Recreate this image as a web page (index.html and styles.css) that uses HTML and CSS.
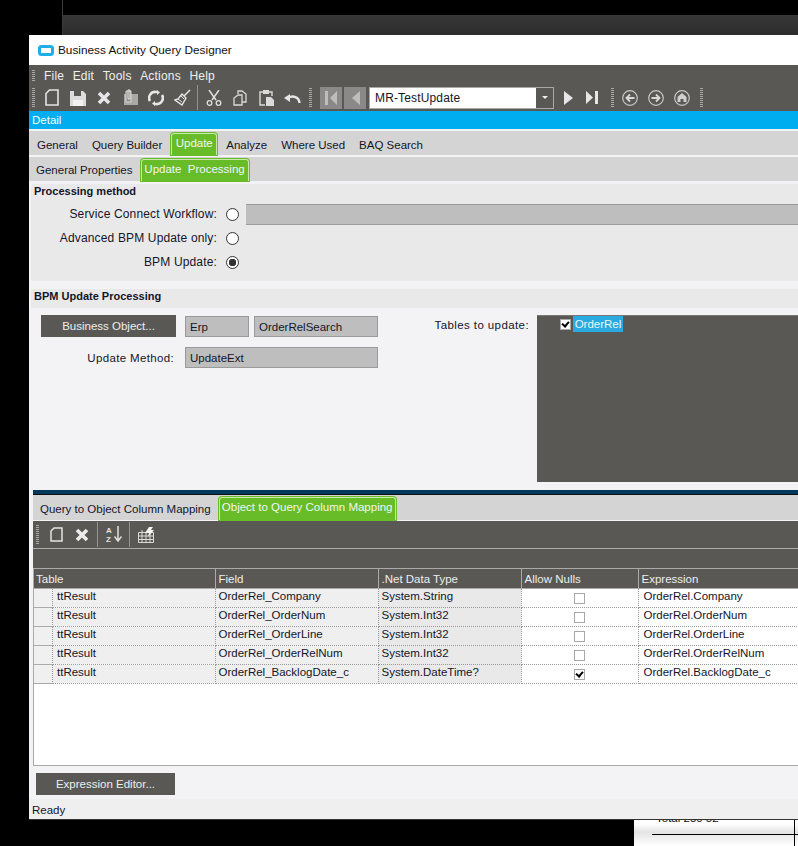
FILE: index.html
```html
<!DOCTYPE html>
<html>

	<head>
		<meta charset="UTF-8">
		<title>Business Activity Query Designer</title>
		<link rel="stylesheet" href="styles.css">
	</head>

	<body>
		<div class="desktop">
			<div class="back-top"></div>
			<div class="back-report">
				<div class="report-text">Total 250 52</div>
				<div class="report-hline"></div>
				<div class="report-vline"></div>
			</div>

			<div class="window">
				<div class="titlebar">
					<svg class="app-icon" width="16" height="11" viewBox="0 0 16 11"><rect x="1.5" y="1.5" width="13" height="8" rx="2" fill="#fff" stroke="#1cb0e6" stroke-width="3"/></svg>
					<span>Business Activity Query Designer</span>
				</div>

				<div class="toolbars">
					<div class="menubar">
						<i class="grip"></i>
						<span>File</span><span>Edit</span><span>Tools</span><span>Actions</span><span>Help</span>
					</div>
					<div class="toolbar">
						<i class="grip tall"></i>
						<svg class="ico m10" width="14" height="17" viewBox="0 0 14 17"><path d="M4.500 1h8.500v15H1V4.500z" fill="none" stroke="#e4e4e4" stroke-width="1.600"/></svg>
						<svg class="ico" width="16" height="16" viewBox="0 0 16 16"><path d="M0 1h13l3 3v12H0z" fill="#dcdcdc"/><path d="M4 1h7v5H4z" fill="#595855"/><path d="M3 10h10v6H3z" fill="#f2f2f2"/></svg>
						<svg class="ico" width="14" height="14" viewBox="0 0 14 14"><path d="M2 2l10 10M12 2L2 12" stroke="#e6e6e6" stroke-width="3.600" fill="none"/></svg>
						<svg class="ico m12" width="15" height="17" viewBox="0 0 15 17"><path d="M1 5h14v11H1z" fill="#a9a9a7"/><path d="M3 2h5v11H3z" fill="#8b8a88" stroke="#d8d8d8" stroke-width="1"/><path d="M5 1h2v9H5z" fill="none" stroke="#e0e0e0"/></svg>
						<svg class="ico m10" width="16" height="16" viewBox="0 0 16 16"><path d="M2 11A6 6 0 0 1 8 2h2M14 5a6 6 0 0 1-6 9H6" fill="none" stroke="#e6e6e6" stroke-width="2.600"/><path d="M9 0l3 2.500L9 5zM7 11l-3 2.500L7 16z" fill="#e6e6e6"/></svg>
						<svg class="ico m10" width="17" height="17" viewBox="0 0 17 17"><path d="M16 1l-6 6" stroke="#e6e6e6" stroke-width="1.500"/><path d="M8 5l4 4-4 7-7-5 3-1z" fill="none" stroke="#e6e6e6" stroke-width="1.400"/><path d="M4 10l4 3M7 7l3 3" stroke="#e6e6e6"/></svg>
						<i class="sep"></i>
						<svg class="ico" width="16" height="16" viewBox="0 0 16 16"><path d="M3 0l7 10M13 0L6 10" stroke="#e0e0e0" stroke-width="1.500"/><circle cx="3.500" cy="13" r="2.300" fill="none" stroke="#e0e0e0" stroke-width="1.300"/><circle cx="12.500" cy="13" r="2.300" fill="none" stroke="#e0e0e0" stroke-width="1.300"/></svg>
						<svg class="ico" width="14" height="16" viewBox="0 0 14 16"><path d="M5 4V1h4l4 3v8H9M5 5L1 8v7h8V5z" fill="none" stroke="#dadada" stroke-width="1.300"/></svg>
						<svg class="ico m12" width="15" height="16" viewBox="0 0 15 16"><path d="M4 2H1v13h5M10 2h3v4" fill="none" stroke="#dadada" stroke-width="1.400"/><path d="M4 0h6v4H4z" fill="#dadada"/><path d="M7 7h5l3 3v6H7z" fill="#dadada"/></svg>
						<svg class="ico m10" width="17" height="12" viewBox="0 0 17 12"><path d="M15.500 11C15 5 9 3 4 6" fill="none" stroke="#e6e6e6" stroke-width="2.400"/><path d="M0 6l6-4v8z" fill="#e6e6e6"/></svg>
						<i class="grip tall"></i>
						<div class="navbtn first"><svg width="12" height="14" viewBox="0 0 12 14"><path d="M0 0h3v14H0zM12 0v14L5 7z" fill="#bdbdbd"/></svg></div>
						<div class="navbtn"><svg width="9" height="14" viewBox="0 0 9 14"><path d="M9 0v14L1 7z" fill="#bdbdbd"/></svg></div>
						<div class="combo">
							<div class="combo-text">MR-TestUpdate</div>
							<div class="combo-arrow"><b></b></div>
						</div>
						<svg class="ico m10" width="9" height="14" viewBox="0 0 9 14"><path d="M0 0v14l9-7z" fill="#e6e6e6"/></svg>
						<svg class="ico m13" width="12" height="13" viewBox="0 0 12 13"><path d="M0 0v13l7-6.500zM9 0h3v13H9z" fill="#e6e6e6"/></svg>
						<i class="grip tall wide-gap"></i>
						<svg class="ico m8" width="16" height="16" viewBox="0 0 16 16"><circle cx="8" cy="8" r="7.300" fill="none" stroke="#c8c8c8" stroke-width="1.200"/><path d="M12.500 8H5M8 4.500L4.500 8 8 11.500" fill="none" stroke="#d8d8d8" stroke-width="1.800"/></svg>
						<svg class="ico m10" width="16" height="16" viewBox="0 0 16 16"><circle cx="8" cy="8" r="7.300" fill="none" stroke="#c8c8c8" stroke-width="1.200"/><path d="M3.500 8H11M8 4.500L11.500 8 8 11.500" fill="none" stroke="#d8d8d8" stroke-width="1.800"/></svg>
						<svg class="ico m10" width="16" height="16" viewBox="0 0 16 16"><circle cx="8" cy="8" r="7.300" fill="none" stroke="#c8c8c8" stroke-width="1.200"/><path d="M8 3l4.500 4v5H9.500V9h-3v3H3.500V7z" fill="#d0d0d0"/></svg>
						<i class="grip tall end"></i>
					</div>
				</div>

				<div class="detail-bar">Detail</div>

				<div class="tabs main-tabs">
					<span class="tab">General</span>
					<span class="tab">Query Builder</span>
					<span class="tab on">Update</span>
					<span class="tab">Analyze</span>
					<span class="tab">Where Used</span>
					<span class="tab">BAQ Search</span>
				</div>
				<div class="tabs sub-tabs">
					<span class="tab">General Properties</span>
					<span class="tab on">Update&nbsp; Processing</span>
				</div>

				<div class="group method">
					<h3>Processing method</h3>
					<div class="method-row">
						<label>Service Connect Workflow:</label>
						<i class="radio"></i>
						<div class="field wide"></div>
					</div>
					<div class="method-row">
						<label>Advanced BPM Update only:</label>
						<i class="radio"></i>
					</div>
					<div class="method-row">
						<label>BPM Update:</label>
						<i class="radio checked"></i>
					</div>
				</div>

				<div class="group-head"><h3>BPM Update Processing</h3></div>
				<div class="bpm">
					<div class="bpm-left">
						<div class="bpm-row">
							<div class="btn bo-btn">Business Object...</div>
							<div class="field erp">Erp</div>
							<div class="field search">OrderRelSearch</div>
						</div>
						<div class="bpm-row method-line">
							<label>Update Method:</label>
							<div class="field ext">UpdateExt</div>
						</div>
					</div>
					<label class="tables-label">Tables to update:</label>
					<div class="tables-list">
						<div class="tables-item">
							<i class="check on"></i>
							<span>OrderRel</span>
						</div>
					</div>
				</div>

				<div class="lower">
					<div class="tabs low-tabs">
						<span class="tab">Query to Object Column Mapping</span>
						<span class="tab on">Object to Query Column Mapping</span>
					</div>
					<div class="grid-tools">
						<i class="grip tall"></i>
						<svg class="ico g-new" width="13" height="15" viewBox="0 0 13 15"><path d="M4 1h8v13H1V4z" fill="none" stroke="#e4e4e4" stroke-width="1.500"/></svg>
						<svg class="ico g-del" width="14" height="14" viewBox="0 0 14 14"><path d="M2 2l10 10M12 2L2 12" stroke="#ececec" stroke-width="3.600" fill="none"/></svg>
						<i class="sep"></i>
						<svg class="ico g-sort" width="16" height="17" viewBox="0 0 16 17"><path d="M12 0v14M8.500 10.500L12 15l3.500-4.500" fill="none" stroke="#e0e0e0" stroke-width="1.500"/><text x="0" y="7" class="az">A</text><text x="0" y="16" class="az">Z</text></svg>
						<i class="sep tight"></i>
						<svg class="ico g-grid" width="16" height="16" viewBox="0 0 16 16"><path d="M.5 5.500h15v10H.5zM.5 9h15M.5 12.500h15M4 3v13M8 5v11M12 5v11" fill="none" stroke="#dadada"/><path d="M7 6l4-6h4l-2 3h3l-6 7 1-4z" fill="#f4f4f4"/></svg>
					</div>
					<div class="grid-strip"></div>
					<div class="grid-box">
						<table class="grid">
							<colgroup>
								<col class="c-table"><col class="c-field"><col class="c-type"><col class="c-null"><col class="c-expr">
							</colgroup>
							<thead>
								<tr><th>Table</th><th>Field</th><th>.Net Data Type</th><th>Allow Nulls</th><th>Expression</th></tr>
							</thead>
							<tbody>
								<tr>
									<td class="first"><i class="selector"></i>ttResult</td>
									<td>OrderRel_Company</td>
									<td class="type">System.String</td>
									<td class="nulls"><i class="check"></i></td>
									<td class="expr">OrderRel.Company</td>
								</tr>
								<tr>
									<td class="first"><i class="selector"></i>ttResult</td>
									<td>OrderRel_OrderNum</td>
									<td class="type">System.Int32</td>
									<td class="nulls"><i class="check"></i></td>
									<td class="expr">OrderRel.OrderNum</td>
								</tr>
								<tr>
									<td class="first"><i class="selector"></i>ttResult</td>
									<td>OrderRel_OrderLine</td>
									<td class="type">System.Int32</td>
									<td class="nulls"><i class="check"></i></td>
									<td class="expr">OrderRel.OrderLine</td>
								</tr>
								<tr>
									<td class="first"><i class="selector"></i>ttResult</td>
									<td>OrderRel_OrderRelNum</td>
									<td class="type">System.Int32</td>
									<td class="nulls"><i class="check"></i></td>
									<td class="expr">OrderRel.OrderRelNum</td>
								</tr>
								<tr>
									<td class="first"><i class="selector"></i>ttResult</td>
									<td>OrderRel_BacklogDate_c</td>
									<td class="type">System.DateTime?</td>
									<td class="nulls"><i class="check on"></i></td>
									<td class="expr">OrderRel.BacklogDate_c</td>
								</tr>
							</tbody>
						</table>
					</div>
					<div class="btn expr-btn">Expression Editor...</div>
				</div>

				<div class="status">Ready</div>
			</div>
		</div>
	</body>

</html>
```

FILE: styles.css
```css
html, body {
	margin: 0;
	padding: 0;
	background: #000;
}

.desktop {
	position: relative;
	width: 798px;
	height: 846px;
	overflow: hidden;
	background: #000;
	font: 11.5px/14px "Liberation Sans", Arial, sans-serif;
	color: #15152a;
}

i {
	display: block;
	font-style: normal;
}

h3 {
	margin: 0;
	font-size: 11px;
	line-height: 14px;
	font-weight: bold;
}

label {
	display: block;
}

/* behind the window */
.back-top {
	position: absolute;
	left: 62px;
	top: 0;
	right: 0;
	height: 35px;
	border-left: 1px solid #3a3a3a;
	box-sizing: border-box;
	background: linear-gradient(#000 15px, #383838 15px, #2c2c2c 35px);
}

.back-report {
	position: absolute;
	left: 634px;
	top: 800px;
	width: 164px;
	height: 46px;
	background: linear-gradient(#fff 24px, #e4e4e4 32px, #fff 46px);
}

.report-text {
	position: absolute;
	left: 22px;
	top: 11px;
	color: #111;
}

.report-hline {
	position: absolute;
	left: 18px;
	right: 0;
	top: 34px;
	height: 1px;
	background: #000;
}

.report-vline {
	position: absolute;
	left: 160px;
	top: 0;
	bottom: 0;
	width: 1px;
	background: #000;
}

/* window */
.window {
	position: absolute;
	left: 29px;
	top: 35px;
	width: 900px;
	height: 785px;
	box-sizing: border-box;
	background: #f3f3f5;
	border-bottom: 1px solid #333;
	display: flex;
	flex-direction: column;
}

.titlebar {
	height: 30px;
	flex: none;
	background: #fff;
	display: flex;
	align-items: center;
	gap: 4px;
	padding-left: 9px;
	font-size: 11.800px;
	color: #111;
}

.toolbars {
	height: 46px;
	flex: none;
	background: #595855;
	color: #efefef;
	font-size: 12px;
}

.menubar {
	height: 19px;
	padding-left: 3px;
	display: flex;
	align-items: center;
	position: relative;
	top: 1px;
	letter-spacing: .2px;
}

.menubar span {
	margin-right: 8.500px;
}

.menubar .grip {
	margin-right: 9px;
}

.grip {
	width: 3px;
	height: 12px;
	flex: none;
	background: repeating-linear-gradient(#a8a8a8 0 1px, #595855 1px 2px);
}

.grip.tall {
	height: 20px;
}

.toolbar {
	height: 27px;
	padding-left: 3px;
	display: flex;
	align-items: center;
}

.toolbar .ico {
	flex: none;
	margin-left: 11px;
}

.toolbar .ico.m8 { margin-left: 8px; }
.toolbar .ico.m10 { margin-left: 10px; }
.toolbar .ico.m12 { margin-left: 12px; }
.toolbar .ico.m13 { margin-left: 13px; }

.sep {
	width: 1px;
	height: 25px;
	flex: none;
	background: #929290;
	margin: 0 8px 0 6px;
}

.toolbar .sep + .ico {
	margin-left: 0;
}

.toolbar .ico + .grip {
	margin-left: 8px;
}

.toolbar .ico + .grip.wide-gap {
	margin-left: 13px;
}

.toolbar .ico + .grip.end {
	margin-left: 10px;
}

.navbtn {
	width: 22px;
	height: 22px;
	flex: none;
	background: #8a8987;
	display: flex;
	align-items: center;
	justify-content: center;
	margin-left: 2px;
}

.navbtn.first {
	margin-left: 8px;
}

.combo {
	width: 185px;
	height: 22px;
	flex: none;
	margin-left: 3px;
	box-sizing: border-box;
	border: 1px solid #a8a8a8;
	background: #fff;
	display: flex;
	color: #15152a;
}

.combo-text {
	flex: 1;
	padding-left: 5px;
	line-height: 20px;
	letter-spacing: .15px;
}

.combo-arrow {
	width: 17px;
	background: #595855;
	display: flex;
	align-items: center;
	justify-content: center;
}

.combo-arrow b {
	width: 0;
	height: 0;
	border: 3px solid transparent;
	border-top: 3px solid #eee;
	border-bottom: 0;
}

.detail-bar {
	height: 18px;
	flex: none;
	background: #00aeef;
	color: #fff;
	line-height: 18px;
	padding-left: 3px;
}

/* tabs */
.tabs {
	display: flex;
	background: #d4d4d4;
	flex: none;
}

.tab {
	display: block;
	white-space: nowrap;
}

.tab.on {
	background: #68bc27;
	color: #f4f4f4;
	border: 1px solid #c8e9ad;
	border-bottom: 0;
	border-radius: 3px 3px 0 0;
	box-shadow: 0 0 0 1px #68bc27;
	box-sizing: border-box;
}

.main-tabs {
	height: 24px;
	margin-top: 2px;
	padding-left: 8px;
	line-height: 28px;
}

.main-tabs .tab {
	margin-right: 14px;
}

.main-tabs .tab.on {
	width: 46px;
	height: 22px;
	margin: 2px 9px 0 -5px;
	text-align: center;
	line-height: 19px;
}

.sub-tabs {
	height: 24px;
	margin-top: 2px;
	padding-left: 7px;
	line-height: 26px;
}

.sub-tabs .tab {
	margin-right: 9px;
}

.sub-tabs .tab.on {
	width: 108px;
	height: 22px;
	margin: 2px 0 0 -1px;
	text-align: center;
	line-height: 19px;
}

/* groups */
.group {
	background: #e9e9e9;
	margin: 3px 0 0 2px;
	border-radius: 3px;
}

.method {
	height: 97px;
	flex: none;
	box-sizing: border-box;
	padding: 0 0 0 3px;
}

.method h3 {
	height: 18px;
	line-height: 15px;
}

.method-row {
	height: 24px;
	display: flex;
	align-items: center;
	margin-left: -5px;
	font-size: 12px;
	letter-spacing: .15px;
}

.method-row label {
	width: 188px;
	text-align: right;
	flex: none;
}

.radio {
	width: 13px;
	height: 13px;
	flex: none;
	box-sizing: border-box;
	margin-left: 9px;
	border: 1px solid #333;
	border-radius: 50%;
	background: #fff;
}

.radio.checked {
	background: radial-gradient(circle, #333 0 3.500px, #fff 4px);
}

.field {
	height: 21px;
	box-sizing: border-box;
	flex: none;
	background: #bebebe;
	border: 1px solid #9a9a9a;
	padding-left: 4px;
	line-height: 21px;
}

.field.wide {
	width: 660px;
	margin-left: 7px;
	border-width: 1px 0;
}

.group-head {
	height: 19px;
	flex: none;
	margin: 8px 0 0 2px;
	padding-left: 3px;
	background: #e9e9e9;
	line-height: 15px;
}

.group-head h3 {
	line-height: 15px;
}

/* BPM Update Processing */
.bpm {
	height: 182px;
	flex: none;
	box-sizing: border-box;
	padding: 7px 0 8px 12px;
	display: flex;
	align-items: flex-start;
}

.bpm-left {
	width: 337px;
	flex: none;
}

.bpm-row {
	display: flex;
	align-items: center;
}

.btn {
	box-sizing: border-box;
	height: 22px;
	background: #595855;
	color: #eee;
	text-align: center;
	line-height: 22px;
	flex: none;
}

.bo-btn {
	width: 135px;
}

.field.erp {
	width: 64px;
	margin-left: 9px;
	margin-top: 1px;
}

.field.search {
	width: 124px;
	margin-left: 5px;
	margin-top: 1px;
}

.method-line {
	margin-top: 10px;
}

.method-line label {
	width: 133px;
	text-align: right;
	flex: none;
	letter-spacing: .35px;
}

.field.ext {
	width: 193px;
	margin-left: 11px;
}

.tables-label {
	width: 151px;
	flex: none;
	text-align: right;
	padding-top: 3px;
	letter-spacing: .4px;
}

.tables-list {
	flex: none;
	width: 340px;
	height: 167px;
	margin-left: 8px;
	background: #595855;
	border-top: 1px solid #777;
	box-sizing: border-box;
}

.tables-item {
	display: flex;
	padding: 0 0 0 23px;
	align-items: center;
}

.tables-item .check {
	margin-right: 2px;
}

.tables-item span {
	height: 16px;
	width: 50px;
	background: #29abe2;
	color: #f2f2f2;
	line-height: 16px;
	text-align: center;
}

.check {
	width: 11px;
	height: 11px;
	flex: none;
	box-sizing: border-box;
	background: #fff;
	border: 1px solid #a8a8a8;
}

.check.on {
	position: relative;
}

.check.on::after {
	content: "";
	position: absolute;
	left: 1px;
	top: 0;
	width: 5px;
	height: 3px;
	border: solid #000;
	border-width: 0 0 2px 2px;
	transform: rotate(-50deg);
	transform-origin: center;
	margin-top: 1px;
}

/* lower part */
.lower {
	flex: none;
	margin-left: 4px;
	border-top: 5px solid #02395a;
	box-shadow: inset 0 1px 0 #000;
}

.low-tabs {
	padding-left: 7px;
	line-height: 28px;
	border-top: 1px solid #111;
	margin-top: -1px;
	box-sizing: border-box;
	height: 26px;
}

.low-tabs .tab {
	margin-right: 8px;
}

.low-tabs .tab.on {
	width: 177px;
	height: 23px;
	margin-top: 2px;
	text-align: center;
	line-height: 19px;
}

.grid-tools {
	height: 27px;
	margin-top: 1px;
	background: #595855;
	display: flex;
	align-items: center;
	padding-left: 3px;
	border-bottom: 1px solid #aaa;
}

.grid-tools .ico {
	flex: none;
}

.g-new {
	margin-left: 11px;
}

.g-del {
	margin-left: 12px;
}

.grid-tools .sep {
	margin: 0 8px;
}

.grid-tools .sep.tight {
	margin-left: 7px;
}

.az {
	font: bold 8px "Liberation Sans", sans-serif;
	fill: #e0e0e0;
}

.grid-strip {
	height: 19px;
	background: #595855;
	border-bottom: 1px solid #aaa;
}

.grid-box {
	height: 197px;
	background: #fff;
	border: solid #aaa;
	border-width: 0 0 1px 1px;
	box-sizing: border-box;
	overflow: hidden;
}

.grid {
	table-layout: fixed;
	width: 804px;
	border-collapse: collapse;
}

.c-table { width: 181px; }
.c-field { width: 163px; }
.c-type { width: 143px; }
.c-null { width: 117px; }
.c-expr { width: 200px; }

.grid th {
	height: 19px;
	padding: 1px 0 0 3px;
	box-sizing: border-box;
	background: #595855;
	color: #eee;
	font-weight: normal;
	text-align: left;
	border-right: 1px solid #aaa;
	border-bottom: 1px solid #aaa;
	white-space: nowrap;
}

.grid th:first-child {
	padding-left: 2px;
}

.grid td {
	height: 19px;
	padding: 0 0 3px 3px;
	box-sizing: border-box;
	background: #efefef;
	border-right: 1px dotted #999;
	border-bottom: 1px dotted #999;
	white-space: nowrap;
}

.grid td.first {
	position: relative;
	padding-left: 23px;
}

.selector {
	position: absolute;
	left: 0;
	top: 0;
	width: 18px;
	height: 18px;
	background: #f0f0f0;
	border-bottom: 1px solid #aaa;
	border-right: 1px dotted #999;
}

.grid td.type {
	background: #e9e9e9;
}

.grid td.nulls {
	background: #fff;
	padding: 2px 0 0 52px;
}

.grid td.expr {
	background: #fff;
	padding-left: 5px;
}

.expr-btn {
	width: 139px;
	margin: 7px 0 4px 3px;
}

.status {
	height: 20px;
	flex: none;
	background: #efefef;
	padding-left: 3px;
	line-height: 23px;
}
```
